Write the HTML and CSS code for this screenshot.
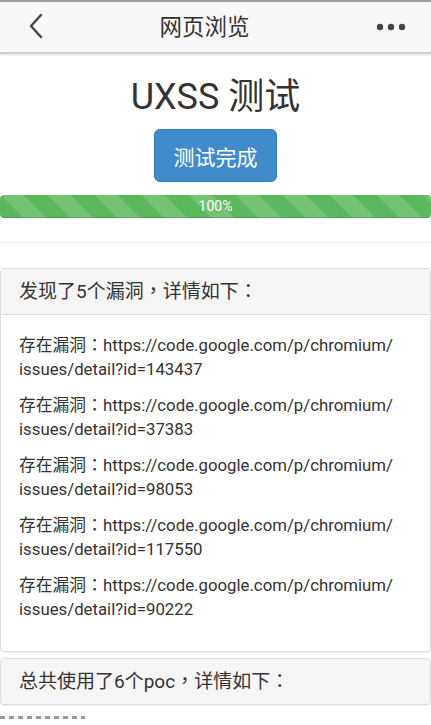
FILE: index.html
```html
<!DOCTYPE html>
<html lang="zh-CN">
<head>
<meta charset="utf-8">
<link rel="stylesheet" href="styles.css">
</head>
<body>
<header class="topbar">
  <svg class="back" width="16" height="26" viewBox="0 0 16 26"><path d="M13 2 L3 13 L13 24" fill="none" stroke="#444" stroke-width="2.4" stroke-linecap="round" stroke-linejoin="round"/></svg>
  <div class="topbar-title">网页浏览</div>
  <svg class="more" width="30" height="8" viewBox="0 0 30 8"><circle cx="4" cy="4" r="3.2" fill="#444"/><circle cx="15" cy="4" r="3.2" fill="#444"/><circle cx="26" cy="4" r="3.2" fill="#444"/></svg>
</header>
<main class="content">
  <h1 class="page-title">UXSS 测试</h1>
  <div class="btn-row"><button class="btn-primary">测试完成</button></div>
  <div class="progress"><div class="progress-bar">100%</div></div>
  <hr class="divider">
  <section class="panel">
    <h3 class="panel-heading">发现了5个漏洞<span class="punct" lang="zh-TW">，</span>详情如下<span class="punct" lang="zh-TW">：</span></h3>
    <div class="panel-body">
      <p>存在漏洞<span class="punct" lang="zh-TW">：</span>https://code.google.com/p/chromium/<br>issues/detail?id=143437</p>
      <p>存在漏洞<span class="punct" lang="zh-TW">：</span>https://code.google.com/p/chromium/<br>issues/detail?id=37383</p>
      <p>存在漏洞<span class="punct" lang="zh-TW">：</span>https://code.google.com/p/chromium/<br>issues/detail?id=98053</p>
      <p>存在漏洞<span class="punct" lang="zh-TW">：</span>https://code.google.com/p/chromium/<br>issues/detail?id=117550</p>
      <p>存在漏洞<span class="punct" lang="zh-TW">：</span>https://code.google.com/p/chromium/<br>issues/detail?id=90222</p>
    </div>
  </section>
  <section class="panel panel-last">
    <h3 class="panel-heading">总共使用了6个poc<span class="punct" lang="zh-TW">，</span>详情如下<span class="punct" lang="zh-TW">：</span></h3>
  </section>
  <div class="marks"></div>
</main>
</body>
</html>
```
FILE: styles.css
```css
* { box-sizing: border-box; }
html, body { margin: 0; padding: 0; }
body {
  font-family: Roboto, "Noto Sans CJK SC", sans-serif;
  color: #333;
  background: #fff;
  width: 431px;
  overflow: hidden;
}
.punct {
  font-family: "Noto Sans CJK TC", sans-serif;
  line-height: 0;
}
.topbar {
  height: 54px;
  border-top: 2px solid #9a9a9a;
  background: #f8f8f8;
  border-bottom: 2px solid #cfcfcf;
  box-shadow: 0 1px 2px rgba(0,0,0,0.12);
  display: flex;
  align-items: center;
  justify-content: space-between;
  padding: 0 25px 0 28px;
  position: relative;
}
.back { display: block; margin-top: -2px; }
.more { display: block; margin-top: -1px; }
.topbar-title {
  position: absolute;
  left: 0; right: 22px;
  text-align: center;
  font-size: 22.5px;
  color: #333;
  top: 11px;
  line-height: 28px;
}
.page-title {
  margin: 19px 0 0;
  font-size: 36px;
  font-weight: 400;
  line-height: 48px;
  text-align: center;
  color: #333;
}
.btn-row { display: flex; justify-content: center; margin-top: 8px; }
.btn-primary {
  width: 123px;
  height: 53px;
  background: #428bca;
  border: 1px solid #357ebd;
  border-radius: 6px;
  color: #fff;
  font-family: Roboto, "Noto Sans CJK SC", sans-serif;
  font-size: 21px;
  padding: 0;
}
.progress {
  margin-top: 13px;
  height: 23px;
  border-radius: 4px;
  overflow: hidden;
  background: #f5f5f5;
}
.progress-bar {
  height: 100%;
  background-color: #5cb85c;
  background-image: linear-gradient(45deg, rgba(255,255,255,.15) 25%, transparent 25%, transparent 50%, rgba(255,255,255,.15) 50%, rgba(255,255,255,.15) 75%, transparent 75%, transparent);
  background-size: 47px 47px;
  box-shadow: inset 0 -1px 0 rgba(0,0,0,.15);
  color: #fff;
  font-size: 14px;
  line-height: 23px;
  text-align: center;
}
.divider {
  margin: 24px 0 0;
  border: 0;
  border-top: 1px solid #eee;
}
.panel {
  margin-top: 25px;
  border: 1px solid #ddd;
  border-radius: 4px;
  box-shadow: 0 1px 1px rgba(0,0,0,.05);
  background: #fff;
}
.panel-heading {
  margin: 0;
  padding: 12px 18px;
  background: #f5f5f5;
  border-bottom: 1px solid #ddd;
  border-radius: 3px 3px 0 0;
  font-size: 19px;
  font-weight: 400;
  line-height: 21px;
  color: #333;
}
.panel-body { padding: 18px; }
.panel-body p {
  margin: 0 0 12px;
  font-size: 16.8px;
  line-height: 24px;
}
.panel-last { margin-top: 6px; }
.panel-last .panel-heading { border-bottom: 0; border-radius: 3px; }
.marks {
  margin-top: 11px;
  width: 85px;
  height: 3px;
  background-image: repeating-linear-gradient(90deg, #999 0, #999 5px, transparent 5px, transparent 9px);
}
```
